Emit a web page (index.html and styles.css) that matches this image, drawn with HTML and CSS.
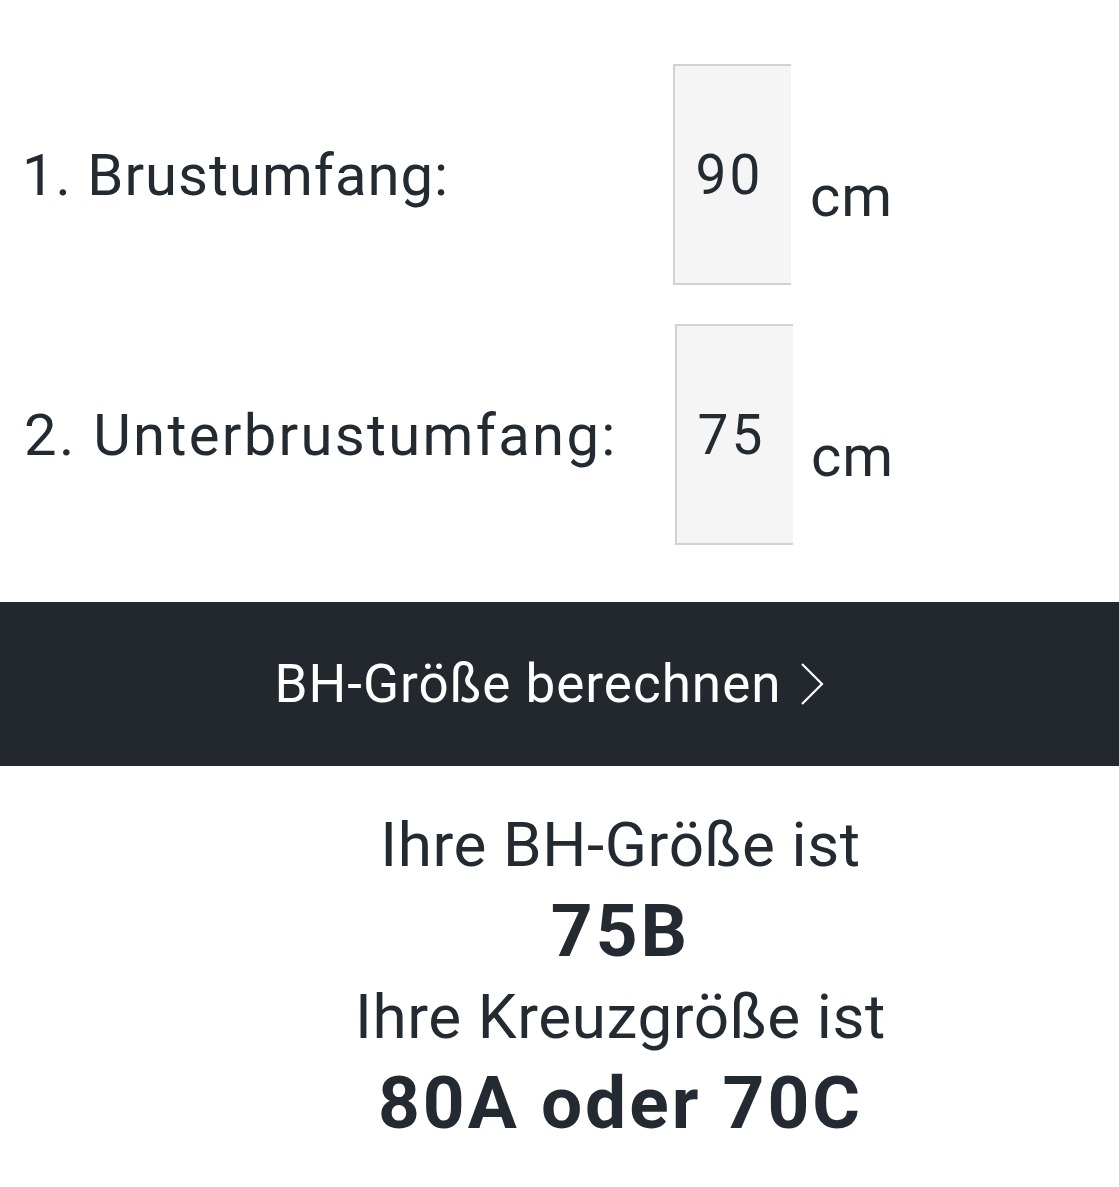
FILE: index.html
```html
<!DOCTYPE html>
<html lang="de">
<head>
<meta charset="utf-8">
<title>BH-Größe berechnen</title>
<link rel="stylesheet" href="styles.css">
</head>
<body>
<main class="calc">
  <div class="row">
    <label class="label" for="brust">1. Brustumfang:</label>
    <input class="box" id="brust" type="text" value="90">
    <span class="unit">cm</span>
  </div>
  <div class="row row-second">
    <label class="label label-second" for="unter">2. Unterbrustumfang:</label>
    <input class="box box-second" id="unter" type="text" value="75">
    <span class="unit unit-second">cm</span>
  </div>
  <button class="submit" type="button">
    <span class="submit-text">BH-Größe berechnen</span>
    <svg class="chevron" width="26" height="44" viewBox="0 0 26 44" aria-hidden="true"><path d="M3 2 L23 22 L3 42" fill="none" stroke="#ffffff" stroke-width="2.2"/></svg>
  </button>
  <section class="result">
    <p class="result-line">Ihre BH-Größe ist</p>
    <p class="result-value">75B</p>
    <p class="result-line">Ihre Kreuzgröße ist</p>
    <p class="result-value">80A oder 70C</p>
  </section>
</main>
</body>
</html>
```
FILE: styles.css
```css
html, body {
  margin: 0;
  padding: 0;
  background: #ffffff;
}
body {
  font-family: Roboto, "Noto Sans", sans-serif;
  color: #232a31;
}
.calc {
  padding-top: 64px;
}
.row {
  display: grid;
  grid-template-columns: 651px 118px auto;
  align-items: center;
  padding-left: 22px;
  margin-bottom: 39px;
}
.row-second {
  margin-bottom: 57px;
}
.label {
  font-size: 58px;
  font-weight: 400;
  letter-spacing: 1px;
}
.label-second {
  padding-left: 2px;
  letter-spacing: 2.3px;
}
.box {
  box-sizing: border-box;
  width: 118px;
  height: 221px;
  margin: 0;
  border: 2px solid #d2d2d2;
  border-right: none;
  background: #f5f5f5;
  font-family: Roboto, "Noto Sans", sans-serif;
  font-size: 55px;
  letter-spacing: 3px;
  color: #232a31;
  text-align: center;
  padding: 0 7px 0 0;
  outline: none;
}
.box-second {
  margin-left: 2px;
}
.unit {
  font-size: 58px;
  padding-left: 19px;
  padding-top: 42px;
  letter-spacing: 1px;
}
.unit-second {
  padding-left: 20px;
}
.submit {
  display: flex;
  width: 100%;
  height: 164px;
  align-items: center;
  justify-content: center;
  gap: 17px;
  margin: 0;
  border: none;
  background: #22282e;
  color: #ffffff;
  font-family: Roboto, "Noto Sans", sans-serif;
  font-size: 53px;
  letter-spacing: 1px;
  padding: 0 20px 0 0;
  cursor: pointer;
}
.chevron {
  display: block;
}
.result {
  padding: 36px 0 0 122px;
  text-align: center;
}
.result p {
  margin: 0;
}
.result-line {
  font-size: 62px;
  line-height: 86px;
  letter-spacing: 0.6px;
}
.result-value {
  font-size: 73px;
  font-weight: 700;
  line-height: 86px;
  letter-spacing: 3px;
}
```
